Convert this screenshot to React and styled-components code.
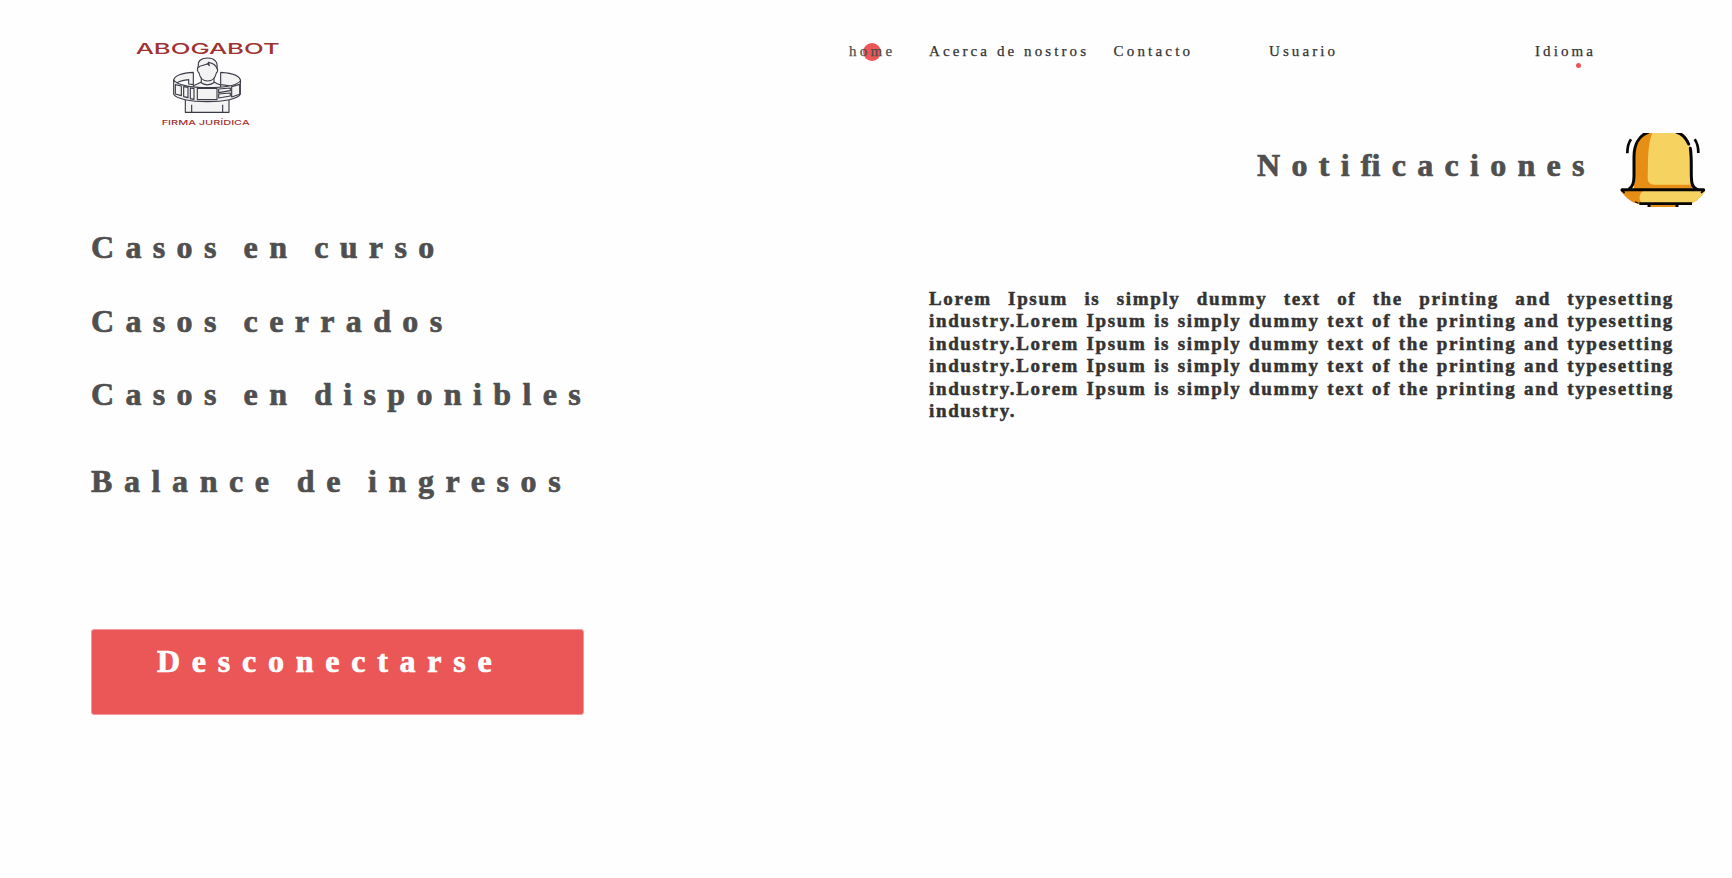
import React from "react";
import styled, { createGlobalStyle } from "styled-components";

const GlobalStyle = createGlobalStyle`
  * { box-sizing: border-box; }
  body {
    margin: 0;
    background: #fefefe;
    color: #333;
    font-family: "Liberation Serif", "Times New Roman", serif;
    overflow: hidden;
  }
`;

const Page = styled.div`
  width: 1732px;
  height: 878px;
  background: #fefefe;
`;

const Header = styled.header`
  display: flex;
  height: 133px;
  padding: 30px 0 0 120px;
`;

const LogoArt = styled.svg`
  display: block;
  flex: none;
  width: 180px;
  height: 103px;
`;

const Nav = styled.nav`
  display: grid;
  grid-template-columns: 80px 184.5px 155.5px 266px 80px;
  align-content: start;
  margin-left: 549px;
  padding-top: 12px;
`;

const NavLink = styled.a`
  position: relative;
  font-size: 15px;
  line-height: 18px;
  letter-spacing: ${(p) => p.$spacing}px;
  color: ${(p) => (p.$active ? "#4f4f4f" : "#333")};
  -webkit-text-stroke: 0.25px currentColor;
  white-space: nowrap;
`;

const Dot = styled.span`
  position: absolute;
  z-index: -1;
  left: ${(p) => p.$x}px;
  top: ${(p) => p.$y}px;
  width: ${(p) => p.$size}px;
  height: ${(p) => p.$size}px;
  border-radius: 50%;
  background: #eb5757;
`;

const NavLayer = styled.div`
  position: relative;
  z-index: 0;
`;

const Main = styled.main`
  display: grid;
  grid-template-columns: 929px 745px;
`;

const Menu = styled.section`
  display: flex;
  flex-direction: column;
  align-items: flex-start;
  padding: 94px 0 0 91px;
`;

const Title = styled.h2`
  margin: 0;
  font-size: 32px;
  font-weight: 700;
  line-height: 40px;
  letter-spacing: ${(p) => p.$spacing || 11.35}px;
  word-spacing: -3.5px;
  color: #4f4f4f;
  white-space: nowrap;
  -webkit-text-stroke: 0.7px currentColor;
`;

const MenuItem = styled(Title)`
  margin-bottom: ${(p) => p.$gap}px;
`;

const Ligature = styled.span`
  letter-spacing: 0;
`;

const LogoutButton = styled.button`
  width: 493px;
  height: 86px;
  margin-top: 128px;
  padding: 12px 0 34px 65px;
  border: 1px solid #f19a9a;
  border-radius: 3px;
  background: #eb5757;
  color: #fff;
  font: 700 32px/38px "Liberation Serif", serif;
  letter-spacing: 11.75px;
  text-align: left;
  -webkit-text-stroke: 0.7px currentColor;
`;

const Notifications = styled.section`
  display: flex;
  flex-direction: column;
`;

const NotificationsHead = styled.div`
  display: grid;
  grid-template-columns: 363px 86px;
  padding: 0 0 0 328px;
`;

const NotificationsTitle = styled(Title)`
  padding-top: 12px;
`;

const BellArt = styled.svg`
  display: block;
  width: 86px;
  height: 74px;
`;

const Message = styled.p`
  margin: 80.5px 0 0;
  font-size: 19px;
  font-weight: 700;
  line-height: 22.5px;
  letter-spacing: 1.65px;
  -webkit-text-stroke: 0.5px currentColor;
`;

const Line = styled.span`
  display: block;
  text-align: justify;
  text-align-last: ${(p) => (p.$last ? "left" : "justify")};
  white-space: ${(p) => (p.$last ? "nowrap" : "normal")};
`;

function Logo() {
  return (
    <LogoArt viewBox="0 0 540 309" role="img" aria-label="Abogabot">
      <text x="47" y="72" fontFamily="Inter, sans-serif" fontSize="43" fontWeight="500" fill="#a03232" textLength="432" lengthAdjust="spacingAndGlyphs">ABOGABOT</text>
      <g fill="#f3f3f4" stroke="#3b3b47" strokeWidth="3.4" strokeLinejoin="round">
        <path d="M220 200V167Q232 162 244 156V142H282V156Q292 162 302 165V200Z" />
        <path d="M196 247V205H327V247Z" />
        <path d="M215 247V224M308 247V224" />
        <path d="M241 157Q262 172 284 157" fill="none" />
        <path d="M235 107C233 92 244 84 263 84C282 84 294 95 291 113C294 119 293 125 289 129C286 143 276 153 263 153C249 153 240 143 237 129C231 123 232 114 235 107Z" />
        <path d="M235 113C242 103 254 108 262 101L268 107L265 97C277 99 288 105 291 116" fill="none" />
        <path d="M161 151C162 137 187 128 220 127V164L206 162V149C187 151 170 156 165 164Z" />
        <path d="M302 127C339 129 362 139 362 155L358 164L334 168L302 164Z" />
        <path d="M161 150C169 164 211 173 262 173C314 173 351 165 361 153V193C354 207 313 215 262 215C211 215 169 207 161 193Z" />
        <path d="M166 164L184 168V197L166 192ZM191 170L204 172V203L191 200ZM211 174L222 176V208L211 206ZM232 175H291V209H232ZM296 177L331 174V182L296 188ZM296 192L331 189V198L296 204ZM335 170L359 163V193L335 201Z" />
      </g>
      <text x="125" y="285" fontFamily="Inter, sans-serif" fontSize="20" fontWeight="500" fill="#a03232" textLength="264" lengthAdjust="spacingAndGlyphs">FIRMA JURÍDICA</text>
    </LogoArt>
  );
}

function Bell() {
  return (
    <BellArt viewBox="60 39 258 222" aria-hidden="true">
      <path d="M101 208C106 180 95 108 111 70C119 49 132 35 150 30H228C249 36 264 52 270 76C278 110 273 175 278 208Z" fill="#e78e17" />
      <path d="M158 36H235C256 43 269 62 270 88C275 121 273 155 274 194H163C149 194 143 186 143 174C145 126 141 75 158 36Z" fill="#f6d360" />
      <path d="M62 213H316C306 228 294 240 279 248L262 252H118L102 248C86 240 73 228 62 213Z" fill="#e78e17" />
      <path d="M130 212H316C306 228 294 240 279 248H124C116 238 116 222 130 212Z" fill="#f6d360" />
      <path d="M147 253H232V262H147Z" fill="#e78e17" />
      <g fill="none" stroke="#050505" strokeWidth="9">
        <path d="M146 36C114 47 102 78 102 110V169C102 187 98 202 86 208" />
        <path d="M231 37C248 43 259 56 266 72" strokeLinecap="round" />
        <path d="M271 85C277 123 271 168 276 190Q279 203 291 208" strokeLinecap="round" />
        <path d="M66 209H311" strokeLinecap="round" />
        <path d="M65 211L72 217M312 211L305 217" strokeWidth="6" strokeLinecap="round" />
        <path d="M118 251H276" strokeWidth="8" />
        <path d="M107 246L114 249" strokeWidth="4" strokeLinecap="round" />
        <path d="M147 262V254M231 262V254" />
        <path d="M93 58Q82 73 82 100M284 58Q295 73 295 99" strokeWidth="8" />
      </g>
    </BellArt>
  );
}

const sentence = "Lorem Ipsum is simply dummy text of the printing and typesetting";

export default function App() {
  return (
    <Page>
      <GlobalStyle />
      <Header>
        <Logo />
        <NavLayer>
          <Nav>
            <NavLink $active $spacing={3.3}>
              <Dot $x={13.5} $y={1} $size={18} />
              home
            </NavLink>
            <NavLink $spacing={3.1}>Acerca de nostros</NavLink>
            <NavLink $spacing={3.2}>Contacto</NavLink>
            <NavLink $spacing={3.1}>Usuario</NavLink>
            <NavLink $spacing={3.1}>
              Idioma
              <Dot $x={41} $y={21} $size={5} />
            </NavLink>
          </Nav>
        </NavLayer>
      </Header>
      <Main>
        <Menu>
          <MenuItem $gap={33.5}>Casos en curso</MenuItem>
          <MenuItem $gap={33.5}>Casos cerrados</MenuItem>
          <MenuItem $gap={46.5}>Casos en disponibles</MenuItem>
          <MenuItem $gap={0} $spacing={11.6}>Balance de ingresos</MenuItem>
          <LogoutButton>Desconectarse</LogoutButton>
        </Menu>
        <Notifications>
          <NotificationsHead>
            <NotificationsTitle $spacing={11.3}>
              Noti<Ligature>f</Ligature>icaciones
            </NotificationsTitle>
            <Bell />
          </NotificationsHead>
          <Message>
            <Line>{sentence}</Line>
            {[0, 1, 2, 3].map((n) => (
              <Line key={n}>industry.{sentence}</Line>
            ))}
            <Line $last>industry.</Line>
          </Message>
        </Notifications>
      </Main>
    </Page>
  );
}
